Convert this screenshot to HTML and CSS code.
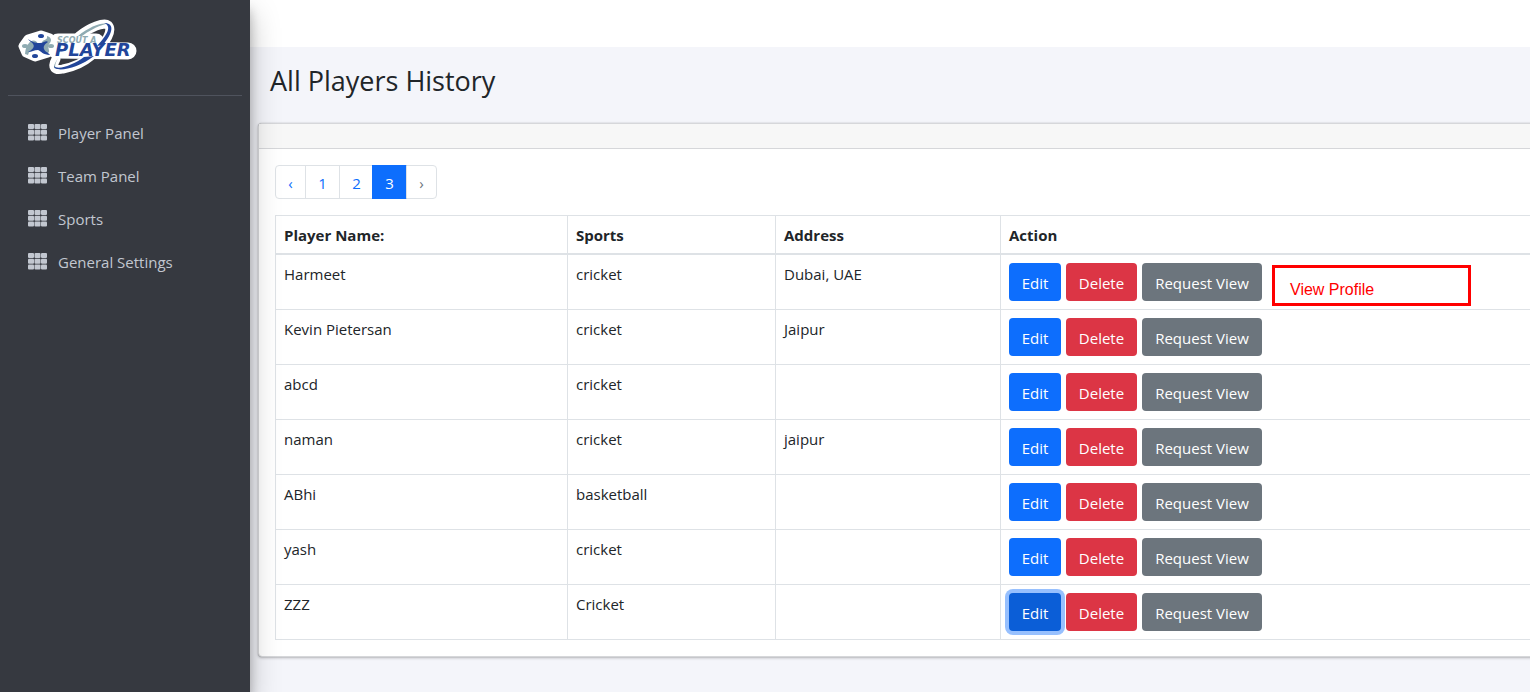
FILE: index.html
```html
<!DOCTYPE html>
<html lang="en">
<head>
<meta charset="utf-8">
<title>All Players History</title>
<link rel="stylesheet" href="styles.css">
</head>
<body>
<svg class="defs" aria-hidden="true">
  <symbol id="grid" viewBox="0 0 20 18">
    <g fill="currentColor">
      <rect x="0" y="0" width="6" height="5" rx="1"/><rect x="6.5" y="0" width="6" height="5" rx="1"/><rect x="13" y="0" width="6" height="5" rx="1"/>
      <rect x="0" y="5.7" width="6" height="5" rx="1"/><rect x="6.5" y="5.7" width="6" height="5" rx="1"/><rect x="13" y="5.7" width="6" height="5" rx="1"/>
      <rect x="0" y="11.4" width="6" height="5" rx="1"/><rect x="6.5" y="11.4" width="6" height="5" rx="1"/><rect x="13" y="11.4" width="6" height="5" rx="1"/>
    </g>
  </symbol>
</svg>
<div class="app">
  <aside class="sidebar">
    <a class="brand" href="#">
      <svg class="logo" width="124" height="58" viewBox="16 18 124 58" role="img" aria-label="Scout a Player">
        <g class="halo">
          <path d="M79 36C90 27 104 22 108 25C112 29 109 37 101 47"/>
          <path d="M56 59C51 68 55 71 63 69C73 67 84 62 91 56"/>
          <path d="M23 46L28 39L41 35L50 38L53 46L48 53L35 57L26 53Z" class="halo-fill"/>
          <path d="M58 42H96M56 50L128 51" class="halo-band"/>
        </g>
        <path d="M78 36C90 26 103 22 107 24C105 24 96 26 82 36Z" class="grey"/>
        <path d="M104 23C115 23 113 33 103 45L97 46C108 34 112 26 104 23Z" class="blue"/>
        <path d="M58 58C53 66 53 68 56 69C54 66 56 62 58 58Z" class="grey"/>
        <path d="M54 66C54 73 78 69 94 56L84 57C75 64 58 71 54 66Z" class="blue"/>
        <path d="M25 54C26 46 27 46 29 43C31 40 36 39 38 44L42 43C42 39 48 41 47 36C53 38 51 42 49 44C47 49 51 51 48 53C43 54 41 51 39 49C35 50 30 48 28 55Z" class="grey"/>
        <path d="M28 39C33 43 37 43 40 43C44 43 46 40 48 42C45 44 43 46 44 49C45 52 48 52 50 55C43 55 41 51 38 50C34 50 32 52 28 52C33 49 35 47 33 44C32 42 30 42 28 39Z" class="blue"/>
        <ellipse cx="41" cy="36" rx="3" ry="2" class="blue"/>
        <ellipse cx="35" cy="56" rx="3" ry="2" class="blue"/>
        <ellipse cx="25" cy="46" rx="3" ry="2" class="grey"/>
        <ellipse cx="51" cy="46" rx="3" ry="2" class="grey"/>
        <text x="57" y="43" class="logo-small">SCOUT A</text>
        <text x="55" y="56" class="logo-large">PLAYER</text>
      </svg>
    </a>
    <nav class="menu">
      <a href="#"><svg class="icon"><use href="#grid"/></svg>Player Panel</a>
      <a href="#"><svg class="icon"><use href="#grid"/></svg>Team Panel</a>
      <a href="#"><svg class="icon"><use href="#grid"/></svg>Sports</a>
      <a href="#"><svg class="icon"><use href="#grid"/></svg>General Settings</a>
    </nav>
  </aside>
  <main class="content">
    <header class="topbar"></header>
    <h1>All Players History</h1>
    <section class="card">
      <div class="card-header"></div>
      <div class="card-body">
        <nav class="pagination" aria-label="Pages">
          <a href="#" class="arrow">‹</a><a href="#">1</a><a href="#">2</a><a href="#" class="active">3</a><span class="arrow">›</span>
        </nav>
        <table class="players">
          <colgroup><col class="col-name"><col class="col-sport"><col class="col-address"><col></colgroup>
          <thead><tr><th>Player Name:</th><th>Sports</th><th>Address</th><th>Action</th></tr></thead>
          <tbody>
            <tr><td>Harmeet</td><td>cricket</td><td>Dubai, UAE</td><td><div class="actions"><button class="btn edit">Edit</button><button class="btn delete">Delete</button><button class="btn request">Request View</button><span class="callout">View Profile</span></div></td></tr>
            <tr><td>Kevin Pietersan</td><td>cricket</td><td>Jaipur</td><td><div class="actions"><button class="btn edit">Edit</button><button class="btn delete">Delete</button><button class="btn request">Request View</button></div></td></tr>
            <tr><td>abcd</td><td>cricket</td><td></td><td><div class="actions"><button class="btn edit">Edit</button><button class="btn delete">Delete</button><button class="btn request">Request View</button></div></td></tr>
            <tr><td>naman</td><td>cricket</td><td>jaipur</td><td><div class="actions"><button class="btn edit">Edit</button><button class="btn delete">Delete</button><button class="btn request">Request View</button></div></td></tr>
            <tr><td>ABhi</td><td>basketball</td><td></td><td><div class="actions"><button class="btn edit">Edit</button><button class="btn delete">Delete</button><button class="btn request">Request View</button></div></td></tr>
            <tr><td>yash</td><td>cricket</td><td></td><td><div class="actions"><button class="btn edit">Edit</button><button class="btn delete">Delete</button><button class="btn request">Request View</button></div></td></tr>
            <tr><td>ZZZ</td><td>Cricket</td><td></td><td><div class="actions"><button class="btn edit focused">Edit</button><button class="btn delete">Delete</button><button class="btn request">Request View</button></div></td></tr>
          </tbody>
        </table>
      </div>
    </section>
  </main>
</div>
</body>
</html>
```

FILE: styles.css
```css
* { box-sizing: border-box; }
body {
  margin: 0;
  background: #f4f5fa;
  color: #212529;
  font: 15px/24px "Segoe UI", "Open Sans", "Noto Sans", sans-serif;
}
a { color: inherit; text-decoration: none; }
.defs { display: none; }
.app { display: flex; min-height: 100vh; overflow: hidden; }

.sidebar {
  flex: 0 0 250px;
  padding: 0 8px;
  background: #363940;
  color: #c2c7d0;
  box-shadow: 0 14px 28px rgba(0, 0, 0, .25), 0 10px 10px rgba(0, 0, 0, .22);
  z-index: 1;
}
.brand {
  display: block;
  height: 96px;
  padding: 18px 8px 0;
  border-bottom: 1px solid #4f535d;
}
.logo { display: block; }
.halo { fill: none; stroke: #fff; stroke-width: 9; stroke-linecap: round; stroke-linejoin: round; }
.halo-fill { fill: #fff; }
.halo-band { stroke-width: 17; }
.blue { fill: #21459a; }
.grey { fill: #8fabb2; }
.logo-small { font: italic bold 8px "DejaVu Sans", sans-serif; fill: #8fabb2; }
.logo-large { font: italic bold 18px "DejaVu Sans", sans-serif; fill: #21459a; }
.menu { display: flex; flex-direction: column; gap: 3px; padding-top: 17px; }
.menu a { display: flex; align-items: center; gap: 10px; height: 40px; padding: 0 20px; }
.icon { width: 20px; height: 18px; }

.content { flex: 1; min-width: 0; }
.topbar { height: 47px; background: #fff; }
h1 { margin: 0; padding: 16px 20px 24px; font-size: 27px; line-height: 36px; font-weight: 400; }
.card {
  margin: 0 -32px 0 8px;
  background: #fff;
  border: 1px solid #d6d7da;
  border-radius: 4px;
  box-shadow: 0 0 1px rgba(0, 0, 0, .3), 0 1px 3px rgba(0, 0, 0, .25);
}
.card-header { height: 25px; background: #f7f7f7; border-bottom: 1px solid #d6d7da; }
.card-body { padding: 16px; }

.pagination { display: flex; height: 34px; margin-bottom: 16px; color: #0d6efd; }
.pagination > * {
  display: flex;
  align-items: center;
  justify-content: center;
  width: 35px;
  margin-left: -1px;
  padding-top: 2px;
  border: 1px solid #dee2e6;
}
.pagination > .arrow { width: 31px; }
.pagination > :first-child { margin-left: 0; border-radius: 4px 0 0 4px; }
.pagination > :last-child { border-radius: 0 4px 4px 0; color: #6c757d; }
.pagination .active { margin-left: -2px; background: #0d6efd; border-color: #0d6efd; color: #fff; }

.players { width: 100%; table-layout: fixed; border-collapse: collapse; }
.col-name { width: 292px; }
.col-sport { width: 208px; }
.col-address { width: 225px; }
.players th, .players td {
  padding: 8px;
  border: 1px solid #dee2e6;
  text-align: left;
  vertical-align: top;
}
.players th { padding: 7px 8px 6px; font-weight: 700; }
.players td { line-height: 22px; }
.players thead th { border-bottom-width: 2px; }
.actions { position: relative; display: flex; gap: 5px; }
.btn {
  height: 38px;
  padding: 2px 0 0;
  border: 0;
  border-radius: 4px;
  color: #fff;
  font: inherit;
  white-space: nowrap;
}
.edit { width: 52px; background: #0d6efd; }
.delete { width: 71px; background: #dc3545; }
.request { width: 120px; background: #6c757d; }
.focused { background: #0b5ed7; box-shadow: 0 0 0 4px #97c0fe; }
.callout {
  position: absolute;
  left: 263px;
  top: 2px;
  width: 199px;
  height: 41px;
  padding: 4px 15px 0;
  border: 3px solid #f00;
  background: #fff;
  color: #f00;
  font: 16px/36px "Liberation Sans", Arial, sans-serif;
}
```
